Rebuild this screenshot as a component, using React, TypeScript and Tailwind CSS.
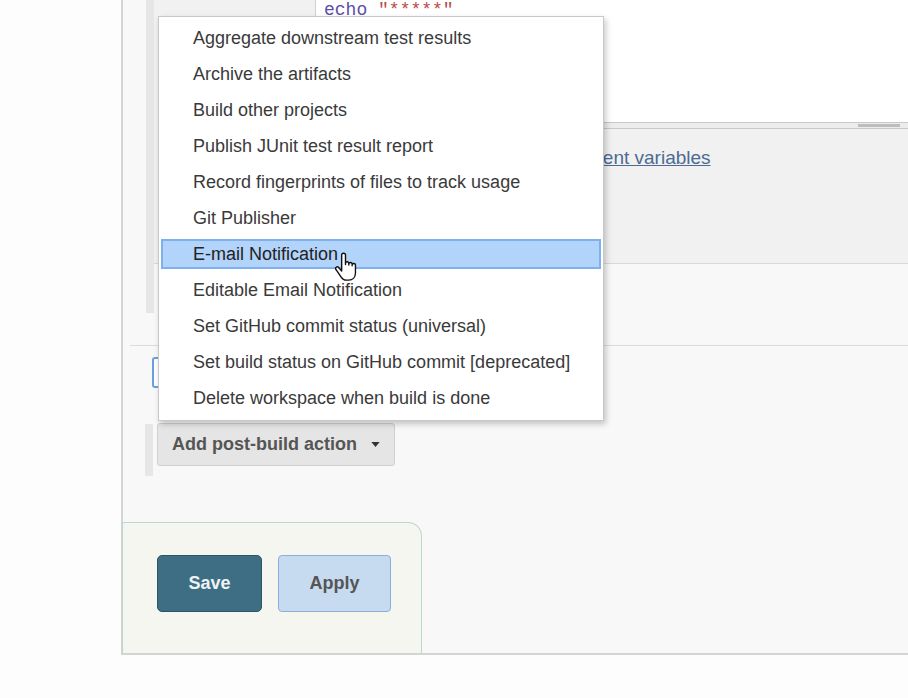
import React from 'react'

const ACTIONS = [
  'Aggregate downstream test results',
  'Archive the artifacts',
  'Build other projects',
  'Publish JUnit test result report',
  'Record fingerprints of files to track usage',
  'Git Publisher',
  'E-mail Notification',
  'Editable Email Notification',
  'Set GitHub commit status (universal)',
  'Set build status on GitHub commit [deprecated]',
  'Delete workspace when build is done',
]

const ACTIVE = 'E-mail Notification'

export default function App() {
  return (
    <div className="relative h-[698px] w-[908px] overflow-hidden bg-[#fdfdfd] font-['Liberation_Sans',Arial,sans-serif] text-[18px] text-[#3a3a3a]">
      <main className="ml-[121px] flex h-[655px] flex-col border-b-2 border-l-2 border-[#d4d4d4] bg-[#f8f8f8]">
        {/* build step */}
        <section className="flex h-[313px] pl-[23px]">
          <div className="w-[8px] bg-[#e6e6e6]" />
          <div className="flex-1">
            <div className="flex h-[264px] border-b border-[#d9d9d9] bg-[#f1f1f1]">
              <div className="w-[161px]" />
              <div className="flex-1">
                <div className="h-[122px] border-l border-[#cfcfcf] bg-white pl-[8px] font-['Liberation_Mono',monospace] text-[18px] leading-[20px]">
                  <span className="text-[#5b4fa6]">echo</span>{' '}
                  <span className="text-[#b84a4a]">"*****"</span>
                </div>
                <div className="flex h-[7px] items-center justify-end border-y border-[#c9c9c9] bg-[#ececec] pr-[8px]">
                  <div className="h-[3px] w-[42px] bg-[#bdbdbd]" />
                </div>
                <a className="mt-[19px] block whitespace-nowrap pl-[9px] text-[19px] leading-[20px] text-[#4d6b92] underline">
                  See the list of available environment variables
                </a>
              </div>
            </div>
          </div>
        </section>

        <div className="ml-[7px] mt-[32px] border-t border-[#dcdcdc] pl-[22px] pt-[11px]">
          <div className="h-[31px] w-[80px] rounded-[3px] border-2 border-[#6aa0e0] bg-white" />
        </div>

        {/* post-build actions */}
        <section className="mt-[36px] flex items-start pl-[22px]">
          <div className="h-[52px] w-[8px] bg-[#e6e6e6]" />
          <button className="ml-[4px] mt-[-1px] flex h-[43px] w-[238px] items-center gap-[14px] rounded-[3px] border border-[#d0d0d0] bg-[#e5e5e5] pl-[14px] font-bold text-[#555]">
            Add post-build action
            <svg viewBox="0 0 10 6" className="h-[5px] w-[9px]" fill="#333">
              <path d="M0 0h10L5 6z" />
            </svg>
          </button>
        </section>

        {/* save bar */}
        <footer className="ml-[-1px] mt-auto flex h-[131px] w-[300px] items-start gap-[16px] rounded-tr-[14px] border-l border-r border-t border-[#bcd8cb] bg-[#f6f6f1] pl-[34px] pt-[32px]">
          <button className="h-[57px] w-[105px] rounded-[5px] border-[1.5px] border-[#2d5464] bg-[#3e6e83] font-bold text-[#eef3f5]">
            Save
          </button>
          <button className="h-[57px] w-[113px] rounded-[4px] border-[1.5px] border-[#8caedb] bg-[#c6daf0] font-bold text-[#555]">
            Apply
          </button>
        </footer>
      </main>

      {/* dropdown menu */}
      <ul className="absolute left-[158px] top-[16px] w-[446px] border border-[#c8c8c8] bg-white pb-[4px] pt-[3px] shadow-[2px_3px_6px_rgba(0,0,0,0.22)]">
        {ACTIONS.map((label) => {
          const active = label === ACTIVE
          return (
            <li key={label} className="h-[36px] px-[2px] py-[3px]">
              <div
                className={`flex h-[30px] items-center whitespace-nowrap border-2 pl-[30px] ${
                  active ? 'border-[#7eb0ee] bg-[#b2d3fa] text-[#222]' : 'border-transparent'
                }`}
              >
                {label}
              </div>
            </li>
          )
        })}
      </ul>

      {/* pointer cursor */}
      <svg
        viewBox="0 0 18 23"
        className="absolute left-[334px] top-[252px] h-[30px] w-[23px]"
        fill="white"
        stroke="#111"
        strokeWidth="1.1"
        strokeLinejoin="round"
      >
        <path d="M6 12V2.2a1.5 1.5 0 0 1 3 0V9.5V8.7a1.3 1.3 0 0 1 2.6 0V10V9.3a1.3 1.3 0 0 1 2.6 0V10.5V10a1.3 1.3 0 0 1 2.6 0V16c0 3.4-2.1 5.8-5.3 5.8H9.6c-1.9 0-3-.9-4-2.4L1.6 13.6a1.3 1.3 0 0 1 2-1.7L6 14.6Z" />
      </svg>
    </div>
  )
}
